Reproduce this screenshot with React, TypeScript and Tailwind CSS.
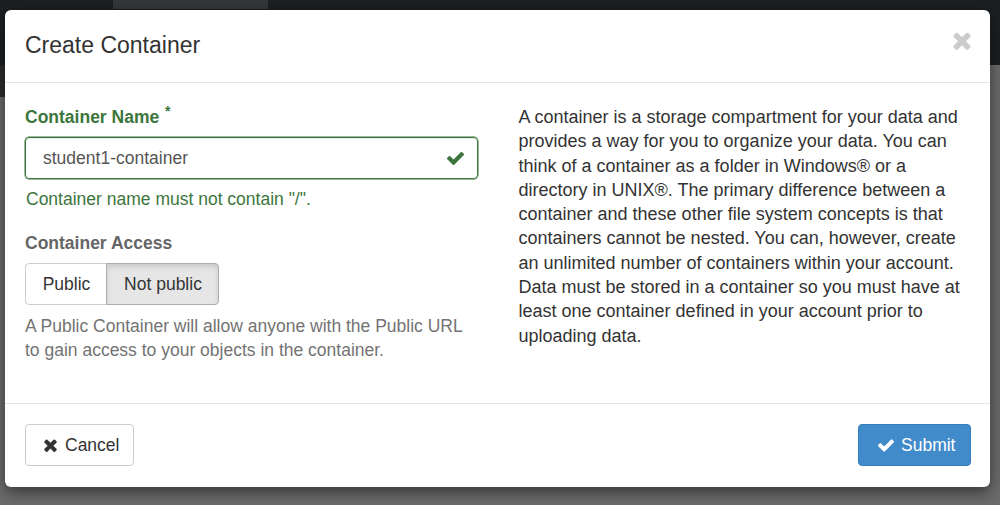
import React from 'react';

const font = { fontFamily: '"Liberation Sans", Arial, Helvetica, sans-serif' };

function TimesIcon({ className }: { className?: string }) {
  return (
    <svg viewBox="88 322 1232 1232" className={className} fill="currentColor">
      <path d="M1298 1322q0 40-28 68l-136 136q-28 28-68 28t-68-28l-294-294-294 294q-28 28-68 28t-68-28l-136-136q-28-28-28-68t28-68l294-294-294-294q-28-28-28-68t28-68l136-136q28-28 68-28t68 28l294 294 294-294q28-28 68-28t68 28l136 136q28 28 28 68t-28 68l-294 294 294 294q28 28 28 68z" />
    </svg>
  );
}

function CheckIcon({ className }: { className?: string }) {
  return (
    <svg viewBox="121 334 1550 1188" className={className} fill="currentColor">
      <path d="M1671 566q0 40-28 68l-724 724-136 136q-28 28-68 28t-68-28l-136-136-362-362q-28-28-28-68t28-68l136-136q28-28 68-28t68 28l294 295 656-657q28-28 68-28t68 28l136 136q28 28 28 68z" />
    </svg>
  );
}

export default function App() {
  return (
    <div className="relative w-[1000px] h-[505px] overflow-hidden bg-[#6b6b6b]" style={font}>
      {/* page behind the backdrop */}
      <div className="flex flex-col h-full">
        <div className="h-[65px] bg-[#1c1f22] flex">
          <div className="w-[113px]" />
          <div className="w-[155px] h-[9px] bg-[#34373a]" />
        </div>
        <div className="flex flex-1">
          <div className="w-[5px] h-[32px] bg-[#2a2c2e]" />
          <div className="flex-1" />
        </div>
      </div>

      {/* modal */}
      <div className="absolute left-[5px] top-[10px] w-[985px] h-[477px] bg-white rounded-[6px] shadow-[0_5px_15px_rgba(0,0,0,0.5)] flex flex-col">
        <div className="h-[73px] border-b border-[#e5e5e5] flex items-center justify-between pl-[20px] pr-[20px] pb-[3px]">
          <h4 className="text-[23px] text-[#333] leading-[32px]">Create Container</h4>
          <button className="text-[#cccccc] mt-[-8px] mr-[-1px]">
            <TimesIcon className="w-[18px] h-[18px]" />
          </button>
        </div>

        <div className="flex pl-[20px] pr-[20px] pt-[22px] pb-[20px] h-[321px] border-b border-[#e5e5e5]">
          <div className="w-[453px] flex flex-col text-[17.5px]">
            <label className="leading-[24px] font-bold text-[#3c763d]">
              Container Name <sup className="text-[14px] relative top-[-7px] left-[1px]">*</sup>
            </label>
            <div className="mt-[8px] h-[42px] rounded-[4px] border border-[#3c763d] shadow-[inset_0_1px_1px_rgba(0,0,0,0.075),0_0_0_0.5px_#3c763d] flex items-center justify-between pl-[17px] pr-[13px]">
              <span className="text-[#555]">student1-container</span>
              <CheckIcon className="w-[17px] h-[13px] text-[#3c763d]" />
            </div>
            <p className="mt-[8px] leading-[24px] text-[#3c763d] pl-px">Container name must not contain "/".</p>

            <label className="mt-[20px] leading-[24px] font-bold text-[#666]">Container Access</label>
            <div className="mt-[8px] flex">
              <button className="h-[42px] w-[82px] border border-[#ccc] rounded-l-[4px] bg-white text-[#333] pl-px">
                Public
              </button>
              <button className="h-[42px] w-[113px] -ml-px border border-[#adadad] rounded-r-[4px] bg-[#e6e6e6] shadow-[inset_0_3px_5px_rgba(0,0,0,0.125)] text-[#333] pl-px">
                Not public
              </button>
            </div>
            <p className="mt-[9px] leading-[24px] text-[#737373] w-[450px]">
              A Public Container will allow anyone with the Public URL to gain access to your objects in the container.
            </p>
          </div>

          <div className="ml-[41px] w-[452px]">
            <p className="text-[18px] leading-[24.3px] text-[#333]">
              A container is a storage compartment for your data and provides a way for you to organize your data. You can
              think of a container as a folder in Windows® or a directory in UNIX®. The primary difference between a
              container and these other file system concepts is that containers cannot be nested. You can, however, create
              an unlimited number of containers within your account. Data must be stored in a container so you must have at
              least one container defined in your account prior to uploading data.
            </p>
          </div>
        </div>

        <div className="flex justify-between items-start pl-[20px] pr-[19px] pt-[20px] text-[17.5px]">
          <button className="h-[42px] w-[109px] border border-[#ccc] rounded-[4px] bg-white flex items-center pl-[18px] gap-[8px] text-[#333]">
            <TimesIcon className="w-[13px] h-[13px]" />
            Cancel
          </button>
          <button className="h-[42px] w-[113px] border border-[#357ebd] rounded-[4px] bg-[#428bca] flex items-center pl-[19px] gap-[7px] text-white">
            <CheckIcon className="w-[16px] h-[13px]" />
            Submit
          </button>
        </div>
      </div>
    </div>
  );
}
